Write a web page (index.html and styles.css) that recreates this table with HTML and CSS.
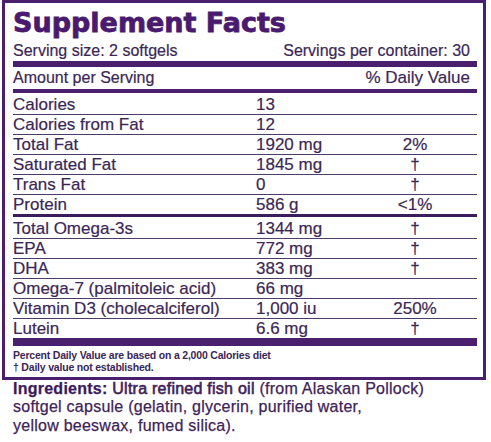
FILE: index.html
```html
<!DOCTYPE html>
<html>
    <head>
        <link rel="stylesheet" href="styles.css">
    </head>

    <body>
        <div class="label">
            <h1 class="title">Supplement Facts</h1>

            <div class="row serving">
                <span>Serving size: 2 softgels</span>
                <span>Servings per container: 30</span>
            </div>

            <div class="row amount">
                <span>Amount per Serving</span>
                <span>% Daily Value</span>
            </div>

            <table class="facts">
                <colgroup>
                    <col class="name">
                    <col class="value">
                    <col class="dv">
                </colgroup>
                <tr class="first"><td>Calories</td><td>13</td><td></td></tr>
                <tr><td>Calories from Fat</td><td>12</td><td></td></tr>
                <tr><td>Total Fat</td><td>1920 mg</td><td>2%</td></tr>
                <tr><td>Saturated Fat</td><td>1845 mg</td><td>†</td></tr>
                <tr><td>Trans Fat</td><td>0</td><td>†</td></tr>
                <tr class="split"><td>Protein</td><td>586 g</td><td>&lt;1%</td></tr>
                <tr class="first"><td>Total Omega-3s</td><td>1344 mg</td><td>†</td></tr>
                <tr><td>EPA</td><td>772 mg</td><td>†</td></tr>
                <tr><td>DHA</td><td>383 mg</td><td>†</td></tr>
                <tr><td>Omega-7 (palmitoleic acid)</td><td>66 mg</td><td></td></tr>
                <tr><td>Vitamin D3 (cholecalciferol)</td><td>1,000 iu</td><td>250%</td></tr>
                <tr class="last"><td>Lutein</td><td>6.6 mg</td><td>†</td></tr>
            </table>

            <div class="notes">
                <div>Percent Daily Value are based on a 2,000 Calories diet</div>
                <div>† Daily value not established.</div>
            </div>
        </div>

        <p class="ingredients">
            <b>Ingredients:</b> <span class="main">Ultra refined fish oil</span> (from Alaskan Pollock)<br>
            softgel capsule (gelatin, glycerin, purified water,<br>
            yellow beeswax, fumed silica).
        </p>
    </body>
</html>
```

FILE: styles.css
```css
body {
    margin: 0;
    background: #fff;
    color: #3b2755;
    font-family: "Liberation Sans", Arial, sans-serif;
}

.label {
    box-sizing: border-box;
    width: 484px;
    margin-left: 2px;
    border: 3px solid #4a1f6d;
    padding: 0 6px 0 8px;
    -webkit-text-stroke: 0.2px #3b2755;
}

.title {
    margin: 0;
    padding-top: 2px;
    font-family: "DejaVu Sans", sans-serif;
    font-size: 27px;
    line-height: 35px;
    font-weight: bold;
    color: #4a1a6f;
    -webkit-text-stroke: 0.8px #4a1a6f;
}

.row {
    display: flex;
    justify-content: space-between;
    padding-right: 7px;
    font-size: 16px;
}

.serving {
    height: 21px;
    line-height: 21px;
    border-bottom: 6px solid #4a1f6d;
}

.amount {
    height: 22px;
    line-height: 22px;
    border-bottom: 4px solid #4a1f6d;
}

.amount span:last-child {
    font-size: 17px;
}

.facts {
    width: 100%;
    border-collapse: collapse;
    font-size: 17px;
}

col.name {
    width: 243px;
}

col.value {
    width: 97px;
}

.facts td {
    padding: 1px 0 0;
    height: 18px;
    line-height: 18px;
    border-bottom: 1.5px solid #4d3a66;
    white-space: nowrap;
}

.facts td:last-child {
    text-align: center;
}

.facts tr.first td {
    padding-top: 2px;
    height: 19px;
}

.facts tr.split td {
    border-bottom: 3px solid #3c1d5c;
}

.facts tr.last td {
    height: 17px;
    border-bottom: 8px solid #4a1f6d;
}

.notes {
    padding: 3px 0 4px;
    font-size: 10.5px;
    line-height: 12px;
    font-weight: bold;
    letter-spacing: -0.2px;
    -webkit-text-stroke: 0;
}

.ingredients {
    margin: 0 0 0 13px;
    font-size: 16px;
    line-height: 18.4px;
    letter-spacing: 0.25px;
    color: #3e2358;
    -webkit-text-stroke: 0.25px #3e2358;
}

.ingredients b {
    color: #3a1a5a;
}

.ingredients .main {
    -webkit-text-stroke: 0.6px #3e2358;
}
```
